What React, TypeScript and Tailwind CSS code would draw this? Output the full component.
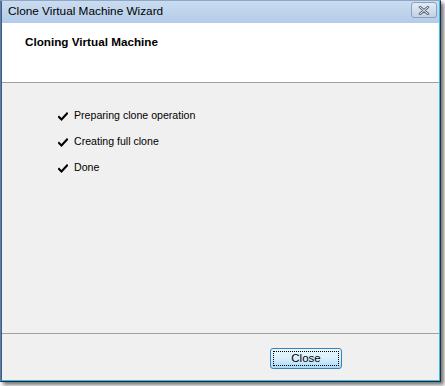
import React from "react";

function Check() {
  return (
    <svg width="10" height="9" viewBox="0 0 10 9" className="shrink-0">
      <path d="M1 5 L3.5 7.5 L9 1.5" stroke="#000" strokeWidth="2" fill="none" strokeLinecap="square" />
    </svg>
  );
}

export default function App() {
  const items = ["Preparing clone operation", "Creating full clone", "Done"];
  return (
    <div className="w-[445px] h-[386px] bg-white" style={{ fontFamily: '"Liberation Sans", Arial, sans-serif' }}>
      <div className="w-[441px] h-[382px] flex flex-col border border-[#1e2c3c] border-l-[#5f7d9e] border-t-[#8ea8c4] shadow-[3px_3px_4px_rgba(0,0,0,0.55)]">
        <div className="flex-1 flex flex-col border-r border-b border-[#38bde6] border-l border-l-[#3d5f86]">
          {/* title bar */}
          <div className="h-[22px] flex items-center justify-between bg-gradient-to-b from-[#cadcf0] to-[#b3cce8] pl-[6px] pr-[2px]">
            <span className="text-[11.8px] text-black leading-none">Clone Virtual Machine Wizard</span>
            <div className="w-[26px] h-[16px] mt-[-4px] rounded-[3px] border border-[#8aa1bb] bg-gradient-to-b from-[#e3ebf4] to-[#c1d2e5] flex items-center justify-center">
              <svg width="12" height="9" viewBox="0 0 12 9">
                <path d="M2 1 L10 8 M10 1 L2 8" stroke="#5a6676" strokeWidth="2.6" strokeLinecap="round" />
                <path d="M2 1 L10 8 M10 1 L2 8" stroke="#f4f6f8" strokeWidth="1" strokeLinecap="round" />
              </svg>
            </div>
          </div>
          {/* header */}
          <div className="h-[60px] bg-white pl-[23px] pt-[10px] border-b border-[#a0a0a0]">
            <div className="text-[11.7px] font-bold text-black">Cloning Virtual Machine</div>
          </div>
          {/* body */}
          <div className="flex-1 bg-[#f0f0f0] flex flex-col">
            <div className="flex-1 pl-[56px] pt-[26px] flex flex-col gap-[12px] border-b border-[#a0a0a0]">
              {items.map((t) => (
                <div key={t} className="flex items-center gap-[6px] h-[14px]">
                  <Check />
                  <span className="text-[10.6px] text-black">{t}</span>
                </div>
              ))}
            </div>
            <div className="h-[46px] flex items-start pl-[268px] pt-[14px]">
              <button className="w-[72px] h-[21px] rounded-[3px] border border-[#3c7fb1] bg-gradient-to-b from-[#eaf6fd] via-[#d9f0fc] to-[#a7d9f5] p-[2px]">
                <div className="w-full h-full border border-dotted border-black flex items-center justify-center text-[11.5px] text-black leading-none">
                  Close
                </div>
              </button>
            </div>
          </div>
        </div>
      </div>
    </div>
  );
}
